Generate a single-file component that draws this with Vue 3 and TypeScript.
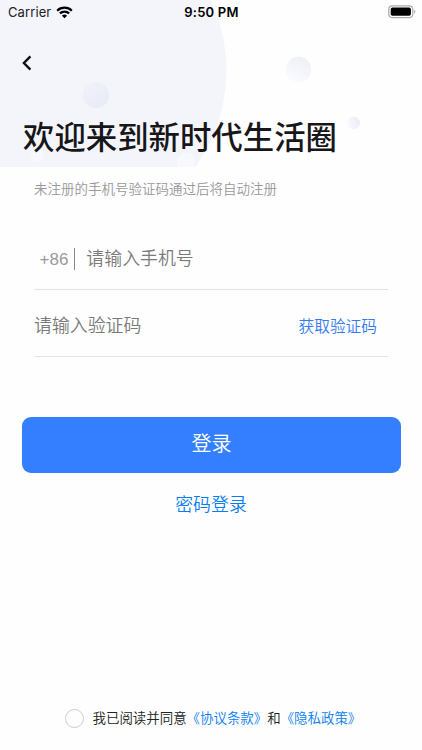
<script setup lang="ts">
import { ref } from 'vue'

const phone = ref('')
const code = ref('')
const agreed = ref(false)
</script>

<template>
  <main class="screen">
    <svg class="backdrop" width="422" height="167" viewBox="0 0 422 167" aria-hidden="true">
      <defs>
        <linearGradient id="dotA" x1="0.8" y1="0" x2="0.3" y2="1">
          <stop offset="0" stop-color="#eeeef8" />
          <stop offset="1" stop-color="#fbfbff" />
        </linearGradient>
        <linearGradient id="dotB" x1="0.2" y1="0" x2="0.7" y2="1">
          <stop offset="0" stop-color="#f0f1fa" />
          <stop offset="1" stop-color="#e8ebf7" />
        </linearGradient>
        <linearGradient id="dotC" x1="1" y1="0.4" x2="0" y2="0.6">
          <stop offset="0" stop-color="#ebebf7" />
          <stop offset="1" stop-color="#fafaff" />
        </linearGradient>
      </defs>
      <circle cx="61.5" cy="70.5" r="165" fill="#f4f5fb" />
      <circle cx="96" cy="95" r="13" fill="url(#dotB)" />
      <circle cx="298.5" cy="69.5" r="12.7" fill="url(#dotA)" />
      <circle cx="353.5" cy="123" r="6.5" fill="url(#dotC)" />
      <circle cx="37" cy="155" r="6.5" fill="#f8f9fe" />
      <circle cx="186" cy="162" r="9" fill="#f8f9fe" />
    </svg>

    <header class="status">
      <div class="carrier">
        <span>Carrier</span>
        <svg width="17" height="13" viewBox="0 0 17 13">
          <path d="M1.200 4.700a10.400 10.400 0 0 1 14.600 0M3.900 7.400a6.600 6.600 0 0 1 9.200 0" fill="none" stroke="#000" stroke-width="2.3" />
          <path d="M8.500 12.300 5.900 9.700a3.700 3.700 0 0 1 5.200 0z" />
        </svg>
      </div>
      <span class="clock">9:50 PM</span>
      <svg class="battery" width="28" height="14" viewBox="0 0 28 14">
        <rect x="0.8" y="0.8" width="24" height="11.8" rx="3.5" fill="#fff" stroke="#aaa" stroke-width="1.2" />
        <rect x="2.7" y="2.6" width="20.2" height="8.2" rx="1.8" />
        <path d="M26.200 4.700c1.600.6 1.600 3.400 0 4z" fill="#aaa" />
      </svg>
    </header>

    <button class="back" type="button">
      <svg width="10" height="16" viewBox="0 0 10 16"><path d="M8.400 1.300 1.900 8l6.500 6.700" fill="none" stroke="#111" stroke-width="2.4" /></svg>
    </button>

    <h1>欢迎来到新时代生活圈</h1>
    <p class="hint">未注册的手机号验证码通过后将自动注册</p>

    <form class="fields" @submit.prevent>
      <div class="field">
        <span class="prefix">+86</span>
        <i class="bar"></i>
        <input v-model="phone" type="tel" placeholder="请输入手机号" />
      </div>
      <div class="field">
        <input v-model="code" type="text" placeholder="请输入验证码" />
        <button class="send" type="button">获取验证码</button>
      </div>
    </form>

    <button class="login" type="button">登录</button>
    <button class="alt" type="button">密码登录</button>

    <footer class="terms">
      <button class="radio" :class="{ on: agreed }" type="button" @click="agreed = !agreed"></button>
      <span>我已阅读并同意<a>《协议条款》</a>和<a>《隐私政策》</a></span>
    </footer>
  </main>
</template>

<style>
body {
  margin: 0;
  background: #fefefe;
}
</style>

<style scoped>
.screen {
  position: relative;
  box-sizing: border-box;
  display: flex;
  flex-direction: column;
  height: 750px;
  overflow: hidden;
  font-family: "Liberation Sans", "Noto Sans CJK SC", sans-serif;
  font-weight: 350;
  background: #fefefe;
}
.screen > * {
  flex-shrink: 0;
}
.backdrop {
  position: absolute;
  top: 0;
  left: 0;
}
.status,
.back,
h1 {
  position: relative;
}
button {
  padding: 0;
  border: 0;
  background: none;
  font-family: inherit;
  font-weight: inherit;
}
svg {
  display: block;
}
.status {
  display: grid;
  grid-template-columns: 1fr auto 1fr;
  align-items: center;
  height: 24px;
  padding: 0 6px 0 7px;
  font-family: Inter, sans-serif;
  font-weight: 400;
}
.carrier {
  display: flex;
  align-items: center;
  gap: 5px;
  padding-left: 1px;
  font-size: 13px;
  letter-spacing: 0.1px;
  color: #222;
}
.clock {
  font-size: 13px;
  font-weight: 600;
  letter-spacing: 0.2px;
}
.battery {
  justify-self: end;
}
.back {
  align-self: flex-start;
  margin: 31px 0 0 22px;
}
h1 {
  margin: 45px 0 0 23px;
  font-size: 31.4px;
  line-height: 46px;
  font-weight: 500;
  color: #17171a;
}
.hint {
  margin: 18px 0 0 34px;
  font-size: 13.5px;
  line-height: 20px;
  color: #999;
}
.fields {
  margin: 23px 34px 0;
}
.field {
  box-sizing: border-box;
  display: flex;
  align-items: center;
  height: 67px;
  padding-top: 4px;
  border-bottom: 1px solid #e4e4e4;
}
.prefix {
  margin: 3px 0 0 5.5px;
  font-size: 17px;
  color: #999;
}
.bar {
  width: 1px;
  height: 22px;
  margin: 1px 11px 0 6px;
  background: #888;
}
input {
  flex: 1;
  min-width: 0;
  margin-top: 1px;
  padding: 0;
  border: 0;
  outline: 0;
  background: none;
  font: 350 17.9px/26px "Liberation Sans", "Noto Sans CJK SC", sans-serif;
}
input::placeholder {
  color: #7a7a7a;
  opacity: 1;
}
.send {
  margin-right: 11px;
  font-size: 15.7px;
  color: #347bf2;
}
.login {
  height: 56px;
  margin: 60px 21px 0 22px;
  padding-bottom: 5px;
  border-radius: 9px;
  background: #347fff;
  font-size: 20px;
  color: #fff;
}
.alt {
  align-self: center;
  margin-top: 19px;
  font-size: 17.9px;
  line-height: 26px;
  color: #087df2;
}
.terms {
  display: flex;
  align-items: center;
  gap: 8.5px;
  margin: auto 0 21px 65px;
  font-size: 13.45px;
  line-height: 20px;
  color: #222;
}
.terms a {
  color: #087df2;
}
.radio {
  box-sizing: border-box;
  width: 19px;
  height: 19px;
  margin-bottom: 1px;
  border: 1px solid #ccc;
  border-radius: 50%;
}
.radio.on {
  background: #347fff;
}
</style>
